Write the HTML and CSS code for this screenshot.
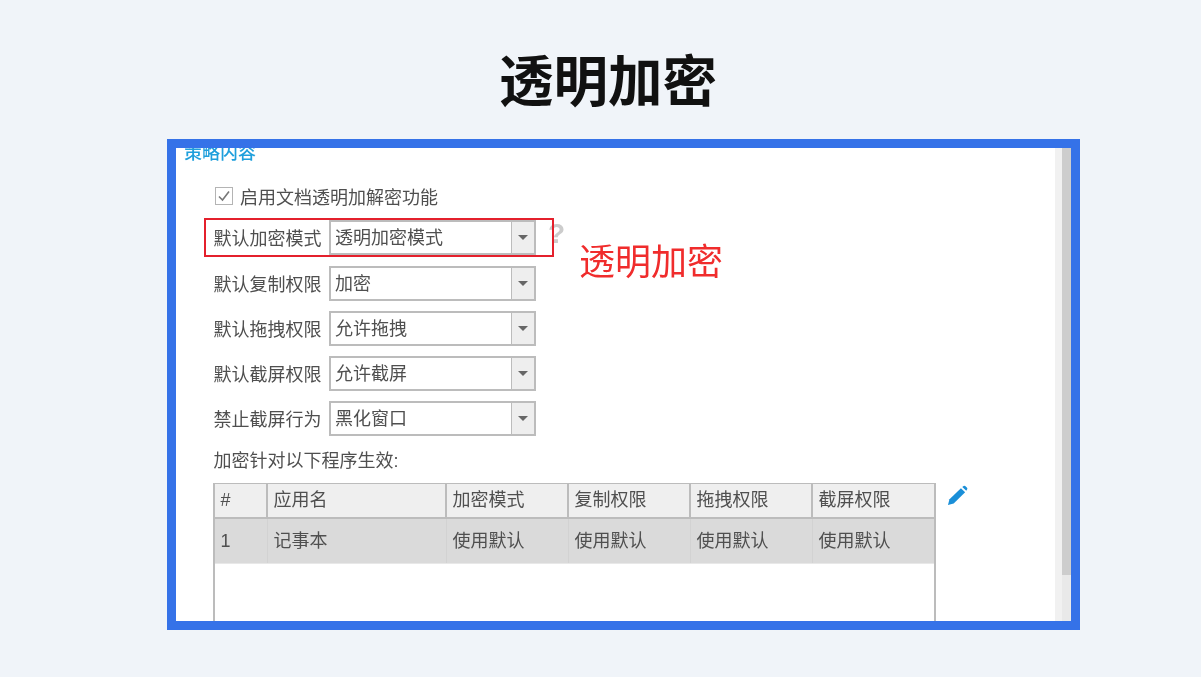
FILE: index.html
```html
<!DOCTYPE html>
<html lang="zh-CN">
<head>
<meta charset="utf-8">
<title>透明加密</title>
<link rel="stylesheet" href="styles.css">
</head>
<body>
<main class="slide">
  <h1 class="title">透明加密</h1>
  <section class="frame">
    <div class="shot">
      <div class="pane">
        <div class="section-head">策略内容</div>
        <label class="check-row">
          <span class="checkbox"><svg viewBox="0 0 16 16" width="16" height="16"><path d="M3 8.5 6.5 12 13 3.5" fill="none" stroke="#777" stroke-width="1.6"/></svg></span>
          <span class="check-text">启用文档透明加解密功能</span>
        </label>
        <div class="form">
          <div class="form-row form-row-first">
            <span class="form-label">默认加密模式</span>
            <div class="select"><span class="select-value">透明加密模式</span><span class="select-arrow"></span></div>
            <span class="help">?</span>
            <span class="highlight"></span>
            <span class="callout">透明加密</span>
          </div>
          <div class="form-row">
            <span class="form-label">默认复制权限</span>
            <div class="select"><span class="select-value">加密</span><span class="select-arrow"></span></div>
          </div>
          <div class="form-row">
            <span class="form-label">默认拖拽权限</span>
            <div class="select"><span class="select-value">允许拖拽</span><span class="select-arrow"></span></div>
          </div>
          <div class="form-row">
            <span class="form-label">默认截屏权限</span>
            <div class="select"><span class="select-value">允许截屏</span><span class="select-arrow"></span></div>
          </div>
          <div class="form-row">
            <span class="form-label">禁止截屏行为</span>
            <div class="select"><span class="select-value">黑化窗口</span><span class="select-arrow"></span></div>
          </div>
        </div>
        <div class="table-caption">加密针对以下程序生效:</div>
        <div class="table-wrap">
          <div class="table">
            <div class="table-row table-head">
              <span class="cell">#</span><span class="cell">应用名</span><span class="cell">加密模式</span><span class="cell">复制权限</span><span class="cell">拖拽权限</span><span class="cell">截屏权限</span>
            </div>
            <div class="table-row table-selected">
              <span class="cell">1</span><span class="cell">记事本</span><span class="cell">使用默认</span><span class="cell">使用默认</span><span class="cell">使用默认</span><span class="cell">使用默认</span>
            </div>
          </div>
          <svg class="pencil" viewBox="0 0 22 22" width="21" height="21"><path d="M1 21 2.6 15 14.6 3.4 19 7.6 7 19.4Z" fill="#1a8fd8"/><path d="M16 2 17.4 1Q18.4.4 19.4 1.2L21 2.8Q21.8 3.8 21 4.8L20.2 6Z" fill="#1a8fd8"/></svg>
        </div>
      </div>
      <div class="scrollbar"><div class="scroll-gutter"></div><div class="scroll-track"><div class="scroll-thumb"></div></div></div>
    </div>
  </section>
</main>
</body>
</html>
```
FILE: styles.css
```css
* { box-sizing: border-box; }
html, body { margin: 0; height: 100%; }
body {
  background: #f0f4f9;
  font-family: "Noto Sans CJK SC", "Liberation Sans", sans-serif;
  overflow: hidden;
}
.slide {
  width: 1201px;
  height: 677px;
  display: flex;
  flex-direction: column;
  align-items: flex-start;
}
.title {
  margin: 0 0 0 499px;
  height: 139px;
  padding-top: 38px;
  font-size: 54.5px;
  line-height: 80px;
  font-weight: 700;
  color: #111;
  white-space: nowrap;
}
.frame {
  margin-left: 167px;
  width: 913px;
  height: 491px;
  border: 9.5px solid #3572e8;
  background: #fff;
  overflow: hidden;
}
.shot {
  display: flex;
  height: 100%;
  color: #4f4f4f;
  font-family: "Liberation Sans", "Noto Sans CJK SC", sans-serif;
  font-size: 18px;
  filter: blur(.4px);
}
.pane {
  flex: 1;
  min-width: 0;
  position: relative;
  padding-left: 7px;
}
.section-head {
  margin-top: -10px;
  height: 26px;
  padding: 2px 0 0 1px;
  line-height: 26px;
  color: #1f9fdc;
  font-size: 18px;
  font-weight: 500;
}
.check-row {
  display: flex;
  align-items: center;
  gap: 7px;
  margin: 19px 0 0 32px;
  height: 26px;
  line-height: 26px;
}
.check-text { padding-top: 3px; }
.checkbox {
  width: 18px;
  height: 18px;
  border: 1px solid #b4b4b4;
  display: flex;
  align-items: center;
  justify-content: center;
}
.form {
  margin: 10.5px 0 0 30px;
  display: flex;
  flex-direction: column;
  gap: 10px;
}
.form-row {
  position: relative;
  display: flex;
  align-items: center;
  height: 35px;
}
.form-row-first { margin-bottom: 1px; }
.form-label { width: 116px; padding: 3px 0 0 .5px; line-height: 26px; white-space: nowrap; }
.select {
  width: 207px;
  height: 35px;
  display: flex;
  border: 2px solid #bcbcbc;
  background: #fff;
}
.select-value { flex: 1; padding-left: 4px; line-height: 33px; }
.select-arrow {
  width: 23px;
  background: #eee;
  border-left: 1px solid #bcbcbc;
  position: relative;
}
.select-arrow::after {
  content: "";
  position: absolute;
  left: 6px;
  top: 13px;
  border: 5px solid transparent;
  border-top: 5px solid #666;
  border-bottom: 0;
}
.help {
  position: absolute;
  left: 335px;
  top: -4px;
  font-size: 28px;
  font-weight: 700;
  color: #ccc;
  line-height: 36px;
}
.highlight {
  position: absolute;
  left: -9px;
  top: -2px;
  width: 350px;
  height: 39px;
  border: 2.5px solid #e4202c;
}
.callout {
  position: absolute;
  left: 366px;
  top: 17.5px;
  font-size: 36px;
  line-height: 52px;
  color: #f02c2c;
  white-space: nowrap;
}
.table-caption { margin: 10px 0 0 30px; height: 26px; line-height: 26px; padding: 2px 0 0 .5px; }
.table-wrap { display: flex; align-items: flex-start; gap: 11px; margin: 11px 0 0 30px; }
.table {
  width: 723px;
  height: 200px;
  border: 2px solid #bcbcbc;
  border-bottom: 0;
  border-top-width: 1.5px;
}
.table-row {
  display: grid;
  grid-template-columns: 53px 179px 122px 122px 122px 121px;
}
.table-head {
  height: 35px;
  background: #efefef;
  border-bottom: 2px solid #bcbcbc;
  line-height: 33px;
}
.table-selected {
  height: 45px;
  background: #dadada;
  border-bottom: 1px solid #e8e8e8;
  line-height: 44px;
}
.cell { padding-left: 5.5px; border-right: 1px solid #d2d2d2; white-space: nowrap; }
.table-head .cell { border-right: 2px solid #bcbcbc; }
.cell:last-child { border-right: 0; }
.pencil { margin-top: 2px; }
.scrollbar { display: flex; width: 16.5px; flex: none; }
.scroll-gutter { width: 7px; background: #f1f1f1; }
.scroll-track { flex: 1; background: #e9e9e9; }
.scroll-thumb { height: 427px; background: #cdcdcd; }
```
